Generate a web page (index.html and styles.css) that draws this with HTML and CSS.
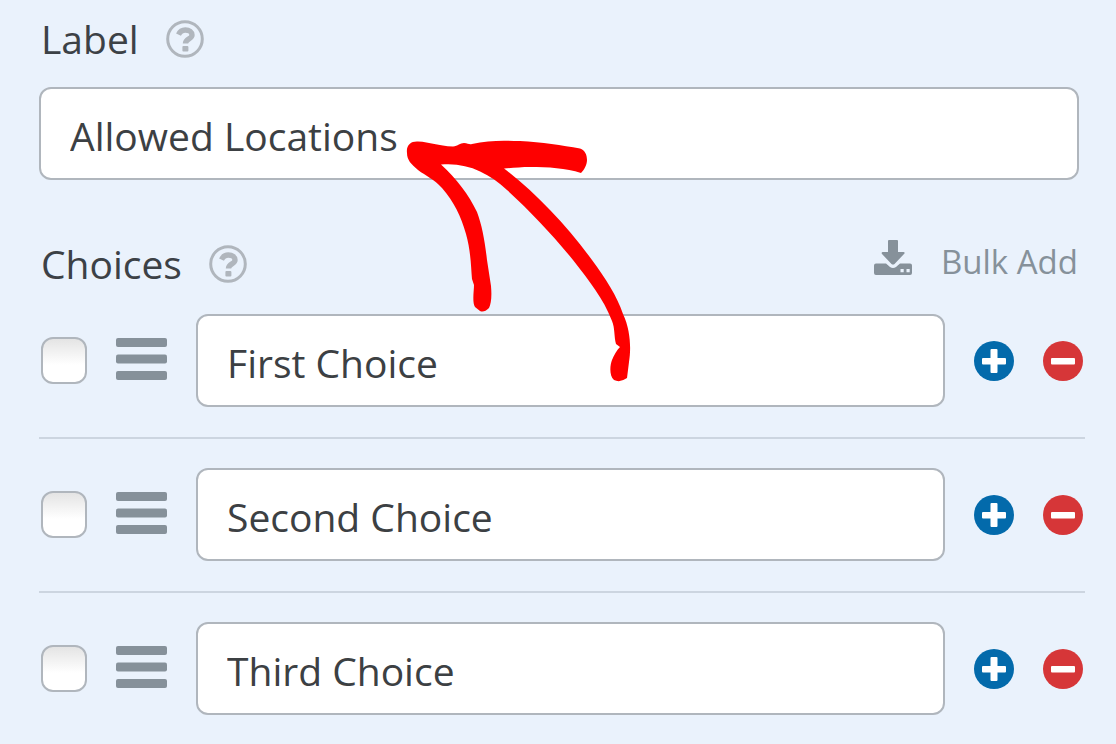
FILE: index.html
```html
<!DOCTYPE html>
<html lang="en">
<head>
<meta charset="utf-8">
<meta name="viewport" content="width=device-width, initial-scale=1">
<title>Field Options</title>
<link rel="stylesheet" href="styles.css">
</head>
<body>
<svg class="symbols" aria-hidden="true">
  <symbol id="help" viewBox="0 0 38 38">
    <circle cx="19" cy="19" r="17.300" fill="none" stroke="currentColor" stroke-width="3"/>
    <path d="M12.500 14.600C14 11.400 16.200 10 19.300 10C23.400 10 26 12 26 15C26 19.300 19.500 18.600 19.500 23.500" fill="none" stroke="currentColor" stroke-width="5.400"/>
    <rect x="16.400" y="26" width="6" height="5.400" rx="1" fill="currentColor"/>
  </symbol>
  <symbol id="bars" viewBox="0 0 51 42">
    <g fill="currentColor"><rect width="51" height="9" rx="2"/><rect y="16.500" width="51" height="9" rx="2"/><rect y="33" width="51" height="9" rx="2"/></g>
  </symbol>
  <symbol id="plus" viewBox="0 0 40 40">
    <circle cx="20" cy="20" r="20" fill="currentColor"/>
    <path d="M17.500 8h5q1 0 1 1v8h7.500q1 0 1 1v4.500q0 1-1 1h-7.500v7.500q0 1-1 1h-5q-1 0-1-1v-7.500H9q-1 0-1-1V18q0-1 1-1h7.500V9q0-1 1-1z" fill="#fff"/>
  </symbol>
  <symbol id="minus" viewBox="0 0 40 40">
    <circle cx="20" cy="20" r="20" fill="currentColor"/>
    <rect x="8" y="17" width="24" height="6.500" rx="1" fill="#fff"/>
  </symbol>
</svg>
<form class="panel">
  <div class="heading">
    <label for="field-label">Label</label>
    <button class="icon-button help" type="button" aria-label="Label help"><svg><use href="#help"/></svg></button>
  </div>
  <div class="field"><input class="text-box" id="field-label" type="text" value="Allowed Locations"></div>
  <div class="heading heading-choices">
    <span id="choices">Choices</span>
    <button class="icon-button help" type="button" aria-label="Choices help"><svg><use href="#help"/></svg></button>
    <a class="bulk" href="#bulk">
      <svg viewBox="0 0 38 36" aria-hidden="true">
        <path d="M15 0h8q1 0 1 1v11h5.500q2 .5.500 2L20.500 24q-1.500 1.200-3 0L8 14q-1-1.500.500-2H14V1q0-1 1-1z" fill="currentColor"/>
        <path d="M2 23.500h10l4 3.500q3 2 6 0l4-3.500h10q2 0 2 2V33q0 2-2 2H2q-2 0-2-2v-7.500q0-2 2-2zM26.500 29v3.200h3.200V29zM32.500 29v3.200h3.200V29z" fill="currentColor" fill-rule="evenodd"/>
      </svg>
      <span>Bulk Add</span>
    </a>
  </div>
  <ul class="choices" aria-labelledby="choices">
    <li class="choice">
      <input class="check" type="checkbox" aria-label="Select first choice by default">
      <button class="icon-button drag" type="button" aria-label="Reorder first choice"><svg><use href="#bars"/></svg></button>
      <input class="text-box" type="text" value="First Choice" aria-label="First choice">
      <button class="icon-button add" type="button" aria-label="Add after first choice"><svg><use href="#plus"/></svg></button>
      <button class="icon-button remove" type="button" aria-label="Remove first choice"><svg><use href="#minus"/></svg></button>
    </li>
    <li class="choice">
      <input class="check" type="checkbox" aria-label="Select second choice by default">
      <button class="icon-button drag" type="button" aria-label="Reorder second choice"><svg><use href="#bars"/></svg></button>
      <input class="text-box" type="text" value="Second Choice" aria-label="Second choice">
      <button class="icon-button add" type="button" aria-label="Add after second choice"><svg><use href="#plus"/></svg></button>
      <button class="icon-button remove" type="button" aria-label="Remove second choice"><svg><use href="#minus"/></svg></button>
    </li>
    <li class="choice">
      <input class="check" type="checkbox" aria-label="Select third choice by default">
      <button class="icon-button drag" type="button" aria-label="Reorder third choice"><svg><use href="#bars"/></svg></button>
      <input class="text-box" type="text" value="Third Choice" aria-label="Third choice">
      <button class="icon-button add" type="button" aria-label="Add after third choice"><svg><use href="#plus"/></svg></button>
      <button class="icon-button remove" type="button" aria-label="Remove third choice"><svg><use href="#minus"/></svg></button>
    </li>
  </ul>
  <svg class="arrow" viewBox="400 130 240 260" aria-hidden="true">
    <path fill="#fe0000" d="M407 153C406 145 411 141 418 141.500C430 142 438 146 453 146.500C458 146 460 143 464 143C468 143 469 145 472 144C488 140 504 140.500 520 141C542 142 562 145.500 580 148.500C585 150 587 155 587 160C587 165 584 170 581 173C566 168 548 167 530 167C521 167 512 168 504 168.500C536 193 567 226 592 260C606 279 617 296 623 314C631 331 631 350 629 362L627 378Q620 383 614 380C609 376 610 365 612 360C614 355 617 350 620 347L616 344C614 337 615 328 612 321C603 298 590 282 573 260C552 234 530 211 507 190C489 173 467 162 441 164.500C456 178 469 195 477 212C482 225 485 242 487 260L491 286C492 297 491 304 489 308Q484 313 480 311L475 307C472 302 474 291 474 285L472 279C471 268 471 252 466 234C461 216 454 202 442 188C434 179 426 176 418 170C411 164 407 160 407 153Z"/>
  </svg>
</form>
</body>
</html>
```

FILE: styles.css
```css
* {
  box-sizing: border-box;
}

body {
  margin: 0;
  min-height: 100vh;
  background: #eaf2fc;
  color: #3c4146;
  font-family: "Open Sans", "Noto Sans", sans-serif;
  font-size: 39px;
  line-height: 54px;
}

.symbols {
  position: absolute;
  width: 0;
  height: 0;
}

.panel {
  position: relative;
  padding: 12px 31px 28px 39px;
}

.heading {
  display: flex;
  align-items: center;
  gap: 27px;
  padding: 0 7px 0 2px;
}

.heading-choices {
  margin: 57px 0 23px;
}

.field {
  margin-top: 21px;
  padding-right: 6px;
}

.text-box {
  display: block;
  flex: 1;
  width: 100%;
  min-width: 0;
  height: 93px;
  padding: 4px 29px 0;
  border: 2px solid #b0b6bd;
  border-radius: 12px;
  background: #fff;
  color: #3c4043;
  font: inherit;
}

.icon-button {
  flex: none;
  padding: 0;
  border: 0;
  background: none;
  cursor: pointer;
}

.icon-button svg {
  display: block;
  width: 100%;
  height: 100%;
}

.help {
  width: 38px;
  height: 38px;
  color: #b0b6bd;
}

.bulk {
  display: flex;
  align-items: center;
  gap: 29px;
  margin-bottom: 4px;
  margin-left: auto;
  color: #86919a;
  font-size: 33px;
  line-height: 46px;
  text-decoration: none;
}

.bulk svg {
  width: 38px;
  height: 36px;
  margin-bottom: 8px;
}

.choices {
  margin: 0;
  padding: 0;
  list-style: none;
}

.choice {
  display: flex;
  align-items: center;
  gap: 29px;
  padding: 0 2px 30px;
}

.choice + .choice {
  padding-top: 29px;
  border-top: 2px solid #ccd5e0;
}

.check {
  flex: none;
  width: 46px;
  height: 47px;
  margin: 0;
  border: 2px solid #b0b6bd;
  border-radius: 12px;
  appearance: none;
  background: linear-gradient(#e4e4e4, #fff 60%);
}

.drag {
  width: 51px;
  height: 42px;
  margin-bottom: 3px;
  color: #86919a;
}

.add,
.remove {
  width: 40px;
  height: 40px;
}

.add {
  color: #036aab;
}

.remove {
  color: #d63638;
}

.arrow {
  position: absolute;
  top: 130px;
  left: 400px;
  width: 240px;
  height: 260px;
  pointer-events: none;
}
```
